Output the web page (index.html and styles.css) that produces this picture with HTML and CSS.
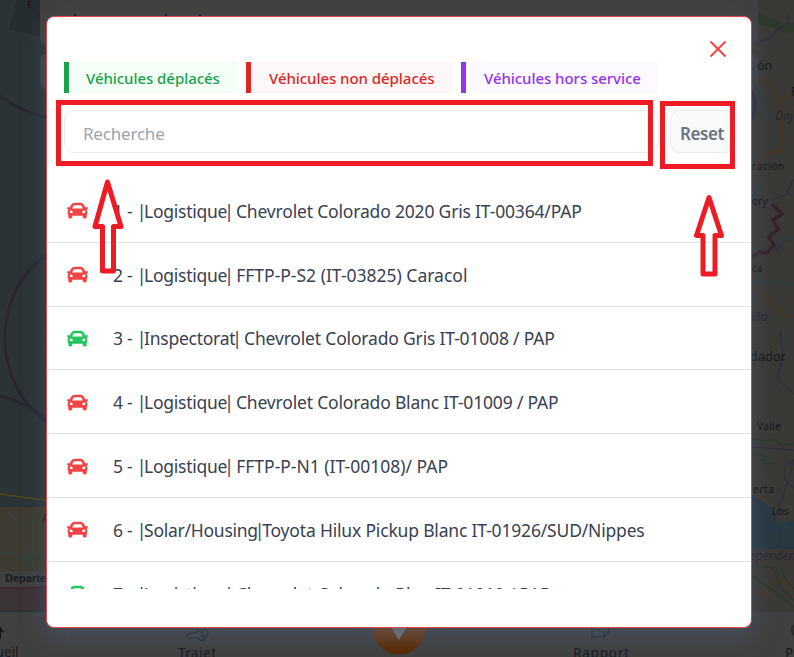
FILE: index.html
```html
<!DOCTYPE html>
<html lang="fr">
<head>
<meta charset="utf-8">
<title>Véhicules</title>
<link rel="stylesheet" href="styles.css">
</head>
<body>
<svg class="map" viewBox="0 0 794 657" width="794" height="657" aria-hidden="true">
  <defs>
    <linearGradient id="ball" x1="0" y1="0" x2="0" y2="1"><stop offset="0" stop-color="#925431"/><stop offset="1" stop-color="#542600"/></linearGradient>
  </defs>
  <rect width="794" height="657" fill="#2b3336"/>
  <path d="M17 0h29v38L9 29Z" fill="#252d30"/>
  <path d="M730 0h64v612h-64z" fill="#3b3936"/>
  <path d="M28 0q5 13 14 18M0 96Q20 111 48 118M48 254C-9 292 -10 382 48 423M0 396q26 6 48 24" fill="none" stroke="#292630" stroke-width="3"/>
  <path d="M0 507h48v64H0z" fill="#3d3b32"/>
  <path d="M0 494q25 4 48 6" fill="none" stroke="#51480f" stroke-width="1.5"/>
  <path d="M0 508q15 2 25 0t23 4" fill="none" stroke="#44352f" stroke-width="1.5"/>
  <path d="M8 512q5 5 9 10M35 519q-5 2-1 4M0 554q12-4 18 2t13 0t17 2M22 549q8 3 6 12M31 549v12" fill="none" stroke="#31453f" stroke-width="1.3"/>
  <path d="M0 571h48v17H0z" fill="#414040"/>
  <path d="M0 588h48v22H0z" fill="#3c3336"/>
  <path d="M0 588h24l24-1" stroke="#40292e" stroke-width="2" fill="none"/>
  <path d="M5 608q10-4 6-7t9-1M39 604v4" stroke="#303444" fill="none"/>
  <path d="M40-8h718v45q0 7-7 7H47q-7 0-7-7ZM47 54h704q7 0 7 7v21q0 7-7 7H47q-7 0-7-7V61q0-7 7-7Z" fill="#404040"/>
  <path d="M758 14q15 3 24 10l12-2v10q-14 2-20-4l-16-4Z" fill="#2c392c"/>
  <path d="M760 41q10 0 14-7t14-11v-8M794 179q-5 8-7 15l-15 6M794 236q-9 2-14 10t-16 3M780 330l3 23-6 26 17 15M751 447l15 1 28 2M794 460l-9 5v15l9 8M794 460l-12 40-8 20" fill="none" stroke="#342e40" stroke-width="1.6"/>
  <path d="M758 78q12 7 15 14t8 7l13-7M781 99v34l-2 18-16 3-8 17M752 287q10 5 16 13t20 17M758 264l-7 18M754 496q7-1 16 7M756 594h10l6-12h12l10 4" fill="none" stroke="#4b371b" stroke-width="1.6"/>
  <path d="M754 85l10 12-2 10 10 14v20M752 187l9 1-8 14M794 236q-12 2-17 9t-17 7M752 283q15-3 26 1t16-4M790 330l-3 16 7 9" fill="none" stroke="#294047" stroke-width="1.5"/>
  <path d="M752 257l8-5 7 1 7-8-5-8 9-8-5-9 9-6-10-10" fill="none" stroke="#37222b" stroke-width="3.5"/>
  <path d="M752 90q10 15 0 31z" fill="#302d40"/>
  <path d="M751 494q12 7 21 15l6 14 16-3v29h-43z" fill="#293840"/>
  <path d="M751 438l12 3 12-1 5 5 14-1M751 454l15 2-4 8 15-1M762 566l11 2 8 20 13 12M751 575l20 14 23 18M781 568q5 16 13 20" fill="none" stroke="#2a392d" stroke-width="1.7"/>
  <path d="M0 612h794v45H0z" fill="#404040"/>
  <g fill="none" stroke="#202733" stroke-width="1.2">
    <path d="M186 638q1-5 6-5t6-3l4 1M188 639q8-3 11 0t6 0M204.500 639q-4-5-2.500-8 2.500-3 5 0t-2.500 8M592 626v9q0 2 2 2h10l5-5v-8M604 637v-5h5M596 630h6"/>
    <circle cx="799" cy="630" r="7" stroke-width="2"/>
  </g>
  <path d="M0 626l4 6h-3v7h-3v-13" fill="#15171b"/>
  <circle cx="399" cy="628" r="26.500" fill="url(#ball)"/>
  <path d="M389 624h20l-10 16z" fill="#6e727a"/>
  <g class="place">
    <text x="757" y="70" font-size="12.5">ón</text><text x="791" y="96" font-size="12">P</text>
    <text class="region" x="775" y="120" font-size="12">Dajabón</text>
    <text x="752" y="170" font-size="10" textLength="32">ración</text><text x="752" y="205" font-size="10">ory</text><text x="752" y="272" font-size="10">ca</text>
    <text class="region" x="751" y="321" font-size="12">iña</text><text x="750" y="361" font-size="12.5" textLength="36">dador</text>
    <text x="757" y="430" font-size="10" textLength="24">Valle</text><text x="753" y="493" font-size="10" textLength="21">erta</text><text x="772" y="515" font-size="10.5">Los</text>
    <text class="lake" x="759" y="530" font-size="10">Lago Enriquillo</text>
    <text class="region" x="750" y="560" font-size="12">ependencia</text>
    <text x="42" y="522" font-size="11">A</text><text x="27" y="8" font-size="12">r</text>
  </g>
  <text class="badge" x="5" y="582">Departement</text>
  <g class="nav-label"><text x="-26" y="657">Accueil</text><text x="178" y="658" textLength="38">Trajet</text><text x="573" y="658" textLength="56">Rapport</text><text x="785" y="658">Profil</text></g>
  <path d="M74 15h2M165 15h2M199 15h2" stroke="#15171b" stroke-width="2"/>
</svg>

<main class="modal">
  <header class="modal-head">
    <svg class="close" viewBox="0 0 18 18" width="18" height="18"><path d="M1.5 1.5l15 15M16.5 1.5l-15 15"/></svg>
  </header>
  <nav class="tabs">
    <span class="tab moved"><b>Véhicules déplacés</b></span>
    <span class="tab still"><b>Véhicules non déplacés</b></span>
    <span class="tab off"><b>Véhicules hors service</b></span>
  </nav>
  <div class="search">
    <div class="field">Recherche</div>
    <div class="reset">Reset</div>
  </div>
  <svg width="0" height="0" class="defs"><symbol id="car" viewBox="0 0 512 512"><path d="M499.99 176h-59.87l-16.64-41.6C406.38 91.63 365.57 64 319.5 64h-127c-46.06 0-86.88 27.63-103.99 70.4L71.87 176H12.01C4.2 176-1.53 183.34.37 190.91l6 24C7.7 220.25 12.5 224 18.01 224h20.07C24.65 235.73 16 252.78 16 272v48c0 16.12 6.16 30.67 16 41.93V416c0 17.67 14.33 32 32 32h32c17.67 0 32-14.33 32-32v-32h256v32c0 17.67 14.33 32 32 32h32c17.67 0 32-14.33 32-32v-54.07c9.84-11.25 16-25.8 16-41.93v-48c0-19.22-8.65-36.27-22.07-48H494c5.51 0 10.31-3.75 11.64-9.09l6-24c1.89-7.57-3.84-14.91-11.65-14.91zm-352.06-17.83c7.29-18.22 24.94-30.17 44.57-30.17h127c19.63 0 37.28 11.95 44.57 30.17L384 208H128l19.93-49.83zM96 319.8c-19.2 0-32-12.76-32-31.9S76.8 256 96 256s48 28.71 48 47.85-28.8 15.95-48 15.95zm320 0c-19.2 0-48 3.19-48-15.95S396.8 256 416 256s32 12.76 32 31.9-12.8 31.9-32 31.9z"/></symbol></svg>
  <ul class="list">
    <li class="row"><svg class="car"><use href="#car"/></svg><span>1 - <i class="open">|</i>Logistique<i class="shut">|</i><span class="name"> Chevrolet Colorado 2020 Gris IT-00364/PAP</span></span></li>
    <li class="row"><svg class="car"><use href="#car"/></svg><span>2 - <i class="open">|</i>Logistique<i class="shut">|</i><span class="code"> FFTP-P-S2 (IT-03825) Caracol</span></span></li>
    <li class="row"><svg class="car on"><use href="#car"/></svg><span>3 - <i class="open">|</i>Inspectorat<i class="shut">|</i><span class="name"> Chevrolet Colorado Gris IT-01008 / PAP</span></span></li>
    <li class="row"><svg class="car"><use href="#car"/></svg><span>4 - <i class="open">|</i>Logistique<i class="shut">|</i><span class="name"> Chevrolet Colorado Blanc IT-01009 / PAP</span></span></li>
    <li class="row"><svg class="car"><use href="#car"/></svg><span>5 - <i class="open">|</i>Logistique<i class="shut">|</i><span class="code"> FFTP-P-N1 (IT-00108)/ PAP</span></span></li>
    <li class="row"><svg class="car"><use href="#car"/></svg><span>6 - <i class="open">|</i>Solar/Housing<i class="shut">|</i><span class="name">Toyota Hilux Pickup Blanc IT-01926/SUD/Nippes</span></span></li>
    <li class="row"><svg class="car on"><use href="#car"/></svg><span>7 - <i class="open">|</i>Logistique<i class="shut">|</i><span class="name"> Chevrolet Colorado Blan IT-01010 / PAP</span></span></li>
  </ul>
</main>

<svg class="marks" viewBox="0 0 794 657" width="794" height="657" aria-hidden="true">
  <path d="M58.5 102.5h592v61h-592zM662.5 103.5h70v63h-70z"/>
  <path d="M107.5 182L95 226.500h7.500v44.500h11v-44.500h7.500zM709 197.500L696.500 235.500h6.500v38.500h12v-38.500h6.500z" stroke-linejoin="round"/>
</svg>
</body>
</html>
```
FILE: styles.css
```css
* { box-sizing: border-box; }
body {
  margin: 0;
  height: 657px;
  padding: 16px 42px 30px 46px;
  overflow: hidden;
  background: #404040;
  font-family: "Noto Sans", "Open Sans", sans-serif;
}
.map, .marks { position: absolute; left: 0; top: 0; }
.marks { z-index: 2; }
.marks path { fill: none; stroke: #ed1c24; stroke-width: 5; }
.place { fill: #15171a; }
.region { fill: #292533; font-style: italic; }
.lake { fill: #26394b; font-style: italic; }
.badge { fill: #17191c; font: bold 11px "Liberation Sans", sans-serif; }
.nav-label { fill: #191d25; font-size: 13.5px; }

.modal {
  position: relative;
  z-index: 1;
  display: flex;
  flex-direction: column;
  height: 612px;
  border: 1px solid #df4545;
  border-radius: 8px;
  background: #fff;
  box-shadow: 0 8px 24px rgba(80, 100, 130, .5);
}
.modal-head { display: flex; justify-content: flex-end; height: 45px; padding: 23px 24px 0 0; }
.close { fill: none; stroke: #ef4444; stroke-width: 2; }
.tabs { display: flex; gap: 9px; height: 31px; padding-left: 17px; }
.tab {
  display: flex;
  align-items: center;
  padding-left: 17px;
  border-left: 5px solid;
  font-size: 15px;
  letter-spacing: -.05px;
  white-space: nowrap;
}
.tab b { font-weight: 550; }
.moved { width: 173px; color: #16a34a; background: #f5fff8; }
.still { width: 206px; padding-left: 18px; color: #dc2626; background: #fef7f7; }
.off { width: 197px; padding-left: 18px; color: #9333ea; background: #fcfaff; }
.search { display: flex; gap: 11px; height: 43px; margin: 17px 16px 0 17px; }
.field, .reset { display: flex; align-items: center; height: 43px; padding-top: 3px; border: 1px solid #e9eaec; border-radius: 10px; font-size: 17px; }
.field { flex: none; width: 595px; padding-left: 18px; color: #9ca3af; letter-spacing: -.2px; }
.reset { flex: none; width: 65px; padding-left: 9px; color: #6b7280; background: #f9fafb; font-weight: 600; letter-spacing: -.4px; }
.defs { position: absolute; }
.list { flex: none; height: 410px; margin: 26px 0 0; padding: 0; overflow: hidden; list-style: none; }
.row { display: flex; align-items: center; gap: 25px; height: 63.8px; padding: 1px 0 0 20px; border-bottom: 1px solid #e2e4e7; color: #374151; font-size: 17.5px; letter-spacing: -.26px; white-space: nowrap; }
.row i { font-style: normal; }
.open { margin-right: -2px; }
.shut { margin: 0 -2px 0 -3px; }
.name { letter-spacing: -.18px; }
.code { letter-spacing: 0; }
.car { width: 21px; height: 21px; fill: #ef4444; }
.on { fill: #22c55e; }
```
